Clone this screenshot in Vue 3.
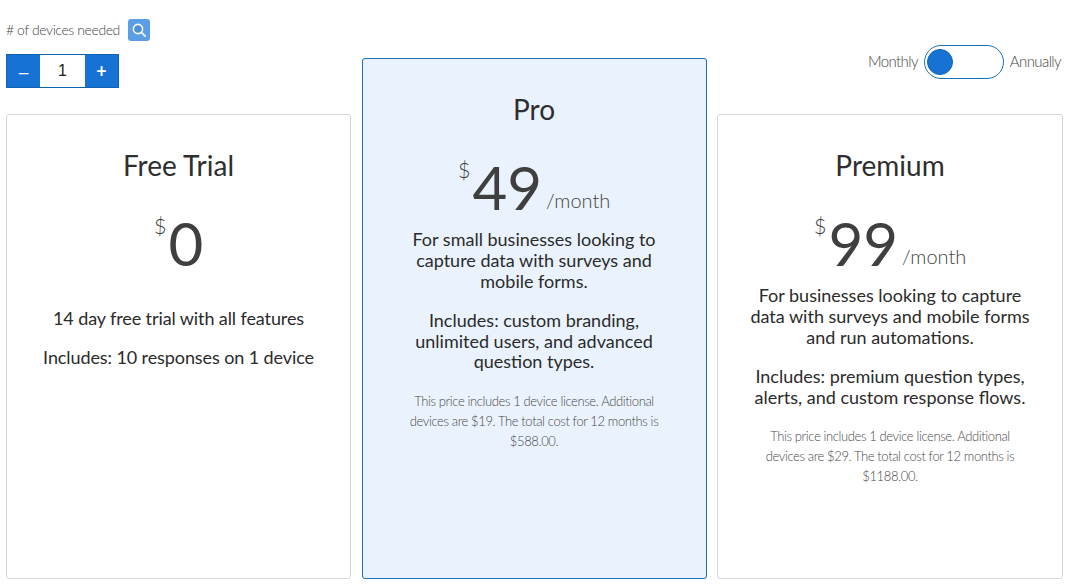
<script setup>
const plans = [
  { name: 'Free Trial', price: '0', lines: ['14 day free trial with all features', 'Includes: 10 responses on 1 device'] },
  { name: 'Pro', price: '49', per: '/month', featured: true,
    lines: ['For small businesses looking to capture data with surveys and mobile forms.', 'Includes: custom branding, unlimited users, and advanced question types.'],
    note: 'This price includes 1 device license. Additional devices are $19. The total cost for 12 months is $588.00.' },
  { name: 'Premium', price: '99', per: '/month',
    lines: ['For businesses looking to capture data with surveys and mobile forms and run automations.', 'Includes: premium question types, alerts, and custom response flows.'],
    note: 'This price includes 1 device license. Additional devices are $29. The total cost for 12 months is $1188.00.' }
]
</script>

<template>
  <div class="page">
    <div class="column">
      <div class="controls">
        <div class="label-row">
          <span class="label">#&nbsp;of devices needed</span>
          <button class="search" aria-label="Search">
            <svg width="16" height="16" viewBox="0 0 16 16" fill="none">
              <circle cx="7" cy="7" r="4.6" fill="#4d8fd8" stroke="#fff" stroke-width="1.6" />
              <path d="M10.4 10.4 14 14" stroke="#e4f0fb" stroke-width="2" stroke-linecap="round" />
            </svg>
          </button>
        </div>
        <div class="stepper">
          <span class="step minus">—</span>
          <span class="count">1</span>
          <span class="step">+</span>
        </div>
      </div>
      <article class="card">
        <h2>{{ plans[0].name }}</h2>
        <div class="price"><sup>$</sup><b>{{ plans[0].price }}</b></div>
        <p v-for="l in plans[0].lines" :key="l" class="desc free">{{ l }}</p>
      </article>
    </div>

    <div class="column">
      <article class="card featured">
        <h2>{{ plans[1].name }}</h2>
        <div class="price"><sup>$</sup><b>{{ plans[1].price }}</b><span class="per">{{ plans[1].per }}</span></div>
        <p v-for="l in plans[1].lines" :key="l" class="desc">{{ l }}</p>
        <p class="note">{{ plans[1].note }}</p>
      </article>
    </div>

    <div class="column">
      <div class="toggle-row">
        <span class="toggle-label">Monthly</span>
        <span class="toggle"><span class="knob"></span></span>
        <span class="toggle-label">Annually</span>
      </div>
      <article class="card">
        <h2>{{ plans[2].name }}</h2>
        <div class="price"><sup>$</sup><b>{{ plans[2].price }}</b><span class="per">{{ plans[2].per }}</span></div>
        <p v-for="l in plans[2].lines" :key="l" class="desc">{{ l }}</p>
        <p class="note">{{ plans[2].note }}</p>
      </article>
    </div>
  </div>
</template>

<style>
html, body { margin: 0; background: #fff; }
</style>

<style scoped>
.page {
  width: 1070px;
  height: 586px;
  box-sizing: border-box;
  padding: 58px 7px 7px 6px;
  display: grid;
  grid-template-columns: 345px 345px 346px;
  column-gap: 10.5px;
  font-family: Lato, "Open Sans", sans-serif;
  color: #2b2b2b;
  position: relative;
}
.column { display: flex; flex-direction: column; justify-content: flex-end; position: relative; height: 521px; }
.card {
  box-sizing: border-box;
  height: 465px;
  border: 1px solid #d8d8d8;
  border-radius: 3px;
  background: #fff;
  text-align: center;
  padding: 33px 30px 0;
}
.card.featured {
  height: 521px;
  background: #eaf3fd;
  border-color: #1a72b8;
}
h2 { margin: 0; font-size: 28px; line-height: 34px; font-weight: 400; color: #2e2e2e; }
.price {
  margin-top: 25px;
  height: 70px;
  display: flex;
  justify-content: center;
  align-items: flex-end;
  color: #3f3f3f;
}
sup { font-size: 22px; font-weight: 300; line-height: 1; align-self: flex-start; margin-top: 8px; margin-right: 2px; }
b { font-size: 60px; font-weight: 400; line-height: 68px; }
.per { font-size: 20px; font-weight: 300; color: #444; margin-left: 4px; line-height: 30px; margin-bottom: 6px; }
.desc { margin: 8px 0 0; font-size: 18px; line-height: 20.75px; color: #2b2b2b; }
.desc + .desc { margin-top: 18.5px; }
.desc.free { margin-top: 31px; letter-spacing: -0.1px; }
.desc.free + .desc.free { margin-top: 18.5px; }
.note { margin: 18.5px 14px 0; font-size: 13px; letter-spacing: -0.38px; line-height: 20px; font-weight: 300; color: #4a4a4a; }
.controls { position: absolute; top: -39px; left: 0; }
.label-row { display: flex; align-items: center; gap: 8px; height: 22px; }
.label { font-size: 14px; letter-spacing: -0.4px; font-weight: 300; color: #444; padding-bottom: 2px; }
.search {
  width: 22px; height: 22px; padding: 0; border: 0; border-radius: 3px;
  background: #5a9fe6;
  display: flex; align-items: center; justify-content: center;
}
.stepper {
  margin-top: 13px;
  display: flex;
  height: 34px;
  width: 113px;
  border: 1px solid #0f62b0;
  box-sizing: border-box;
}
.step {
  width: 33px; background: #1673d3; color: #fff; font-size: 18px; font-weight: 700;
  display: flex; align-items: center; justify-content: center;
}
.step.minus { font-size: 14px; font-weight: 700; padding-top: 3px; box-sizing: border-box; }
.count {
  flex: 1; display: flex; align-items: center; justify-content: center;
  font-family: "Liberation Sans", sans-serif; font-size: 16px; color: #222;
}
.toggle-row {
  position: absolute;
  top: -13px;
  right: 2px;
  display: flex;
  align-items: center;
  gap: 6px;
  font-size: 15px;
  letter-spacing: -0.6px;
  font-weight: 300;
  color: #444;
}
.toggle-label { padding-bottom: 2px; }
.toggle {
  box-sizing: border-box;
  width: 80px; height: 34px;
  border: 1.5px solid #1a72b8;
  border-radius: 17px;
  display: flex; align-items: center; padding-left: 2.5px;
}
.knob { width: 26px; height: 26px; border-radius: 50%; background: #1673d3; border: 1px solid #0f62b0; box-sizing: border-box; }
</style>
